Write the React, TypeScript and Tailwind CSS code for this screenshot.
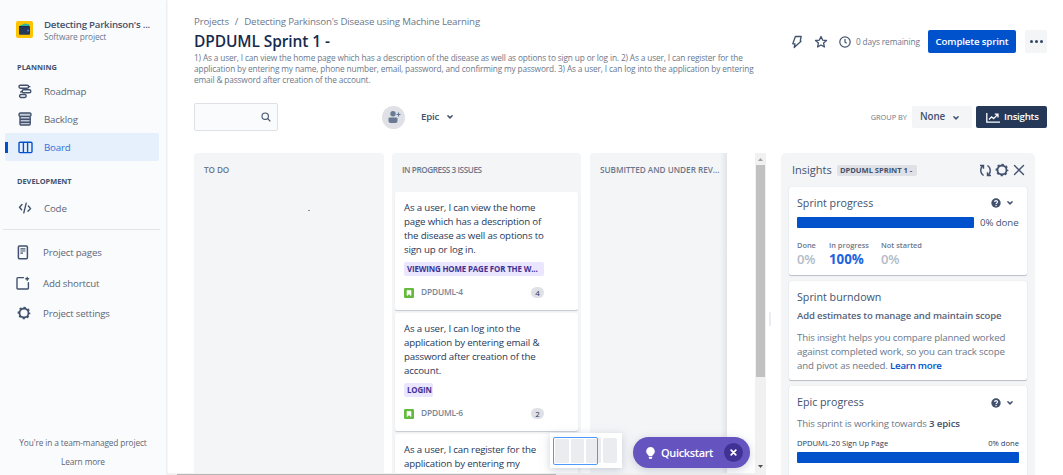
import React from "react";

type IconProps = { className?: string };

const Chevron = ({ className = "" }: IconProps) => (
  <svg viewBox="0 0 8 6" className={`h-[6px] w-[8px] shrink-0 ${className}`} fill="none" stroke="currentColor" strokeWidth="1.5" strokeLinecap="round" strokeLinejoin="round">
    <path d="M1.9 1.8 4 3.9l2.1-2.1" />
  </svg>
);

const Gear = ({ className = "" }: IconProps) => (
  <svg viewBox="0 0 14 14" className={className} fill="none" stroke="currentColor">
    <circle cx="7" cy="7" r="4.500" strokeWidth="1.800" />
    <circle cx="7" cy="7" r="5.600" strokeWidth="1.500" strokeDasharray="2.200 2.198" strokeDashoffset="1.100" />
  </svg>
);

const RoadmapIcon = () => (
  <svg viewBox="0 0 14 15" className="h-[15px] w-[14px]" fill="none" stroke="currentColor" strokeWidth="1.4">
    <rect x="1" y="1.2" width="9.6" height="3" rx="1.4" />
    <rect x="4.2" y="5.8" width="8.6" height="3" rx="1.4" />
    <rect x="1.6" y="10.5" width="6.6" height="3" rx="1.4" />
    <path d="M10.6 2.600h1.800M4.200 7.200c-1.300 0-1.500.800-1.500 1.600" />
  </svg>
);

const BacklogIcon = () => (
  <svg viewBox="0 0 14 14" className="h-[14px] w-[14px]" fill="#c3c9d4" stroke="currentColor" strokeWidth="1.4">
    <rect x="2" y="4.4" width="10.2" height="8.6" rx="1" />
    <path d="M2 7.3h10.2M2 10.2h10.2" />
    <rect x="1" y="1" width="12" height="3.4" rx="1.3" />
  </svg>
);

const BoardIcon = () => (
  <svg viewBox="0 0 15 13" className="h-[13px] w-[15px]" fill="none" stroke="currentColor" strokeWidth="1.4">
    <rect x="1" y="1.2" width="13" height="10.4" rx="1" />
    <path d="M5.4 1.2v10.4M9.6 1.2v10.4" />
  </svg>
);

const CodeIcon = () => (
  <svg viewBox="0 0 14 12" className="h-[12px] w-[14px]" fill="none" stroke="currentColor" strokeWidth="1.4" strokeLinecap="round" strokeLinejoin="round">
    <path d="M4 2.600 1.500 5.200 3.600 7.800M8.200 1.200 5.800 10.800M10.400 4 12.600 6.600 10 9.200" />
  </svg>
);

const PageIcon = () => (
  <svg viewBox="0 0 12 15" className="h-[15px] w-[12px]" fill="none" stroke="currentColor" strokeWidth="1.5">
    <rect x="1.4" y="1" width="9" height="12.8" rx="1" />
    <path d="M3.4 3.9h5M3.4 6h5M3.4 8.1h2.6" strokeWidth="1.1" />
  </svg>
);

const ShortcutIcon = () => (
  <svg viewBox="0 0 14 14" className="h-[14px] w-[14px]" fill="none" stroke="currentColor" strokeWidth="1.4" strokeLinecap="round">
    <path d="M7.500 1.600H1.8a.8.8 0 0 0-.8.8v9.8a.8.8 0 0 0 .8.8h9.8a.8.8 0 0 0 .8-.8V6.6" />
    <path d="M11.2 1.400v2.800M9.800 2.8h2.800" />
  </svg>
);

const HelpIcon = () => (
  <svg viewBox="0 0 10 10" className="h-[10px] w-[10px]">
    <circle cx="5" cy="5" r="4.7" fill="#42526e" />
    <path d="M3.6 4c0-1.9 2.9-1.8 2.9-.1C6.500 5 5.100 4.900 5.100 6" fill="none" stroke="#fff" strokeWidth="1.1" />
    <circle cx="5.100" cy="7.500" r=".7" fill="#fff" />
  </svg>
);

const StoryIcon = () => (
  <svg viewBox="0 0 10 10" className="h-[10px] w-[10px]">
    <rect width="10" height="10" rx="1.200" fill="#63ba3c" />
    <path d="M3 2.400h4v5.200L5 5.900 3 7.600Z" fill="#fff" stroke="#fff" strokeWidth=".6" />
  </svg>
);

function NavItem({ icon, label, height, active = false }: { icon: React.ReactNode; label: string; height: string; active?: boolean }) {
  return (
    <div className={`flex items-center ${height} ${active ? "rounded-[2px] bg-[#e6effc] text-[#0052cc]" : "text-[#42526e]"}`}>
      <span className={`h-[11px] w-[3px] ${active ? "bg-[#0052cc]" : ""}`} />
      <span className="flex w-[34px] items-center justify-center">{icon}</span>
      <span className={`ml-[2px] pt-[2px] text-[9.700px] tracking-[-0.16px] ${active ? "text-[#2f6fd8]" : "text-[#5a6679]"}`}>{label}</span>
    </div>
  );
}

function Sidebar() {
  return (
    <aside className="flex h-full w-[166px] shrink-0 flex-col bg-[#fafbfc] pl-[5px] shadow-[1px_0_2px_#e4e6ea]">
      <header className="mt-[14px] flex h-[30px] items-center pl-[11px]">
        <svg viewBox="0 0 17 17" className="h-[17px] w-[17px]">
          <rect width="17" height="17" rx="2" fill="#ffc400" />
          <path d="M4 4.500 9 2.500 13.500 3.500V6H4Z" fill="#2bb5a0" />
          <rect x="3" y="5" width="11" height="8.800" rx="1" fill="#253858" />
          <circle cx="12" cy="9.500" r="1" fill="#2684ff" />
          <path d="M3 5.500h10" stroke="#172b4d" />
        </svg>
        <div className="ml-[11px] pt-[2px] whitespace-nowrap">
          <div className="text-[9.700px] leading-[13px] font-semibold tracking-[-0.24px] text-[#42526e]">Detecting Parkinson's ...</div>
          <div className="text-[8.400px] leading-[12px] tracking-[-0.13px] text-[#6b778c]">Software project</div>
        </div>
      </header>
      <h2 className="mt-[17px] pl-[12px] text-[7.400px] leading-[12px] font-bold text-[#42526e]">PLANNING</h2>
      <nav className="mt-[4px] mr-[7px]">
        <NavItem icon={<RoadmapIcon />} label="Roadmap" height="h-[28px]" />
        <NavItem icon={<BacklogIcon />} label="Backlog" height="h-[28px]" />
        <NavItem icon={<BoardIcon />} label="Board" height="h-[28px]" active />
      </nav>
      <h2 className="mt-[14px] pl-[12px] text-[7.400px] leading-[12px] font-bold text-[#42526e]">DEVELOPMENT</h2>
      <nav className="mt-[7px] mr-[6px]">
        <NavItem icon={<CodeIcon />} label="Code" height="h-[28px]" />
      </nav>
      <hr className="mt-[7px] mr-[6px] -ml-[2px] border-[#e1e4e9]" />
      <nav className="mt-[7px] -ml-[2px] [&>div>span:last-child]:ml-[3px]">
        <NavItem icon={<PageIcon />} label="Project pages" height="h-[31px]" />
        <NavItem icon={<ShortcutIcon />} label="Add shortcut" height="h-[30px]" />
        <NavItem icon={<Gear className="ml-[2px] h-[14px] w-[14px]" />} label="Project settings" height="h-[30px]" />
      </nav>
      <footer className="mt-auto pr-[5px] pb-[4px] text-center text-[8.300px] leading-[19px] tracking-[-0.11px] text-[#5a6679]">
        <div>You're in a team-managed project</div>
        <div>Learn more</div>
      </footer>
    </aside>
  );
}

function TopBar() {
  return (
    <div className="flex h-[96px] justify-between pt-[14px]">
      <div className="w-[575px] whitespace-nowrap">
        <div className="pt-px text-[9.700px] leading-[14px] tracking-[-0.17px] text-[#6b778c]">
          Projects<span className="mx-[6px]">/</span>Detecting Parkinson's Disease using Machine Learning
        </div>
        <h1 className="mt-[2px] text-[15.500px] leading-[20px] font-semibold tracking-[-0.1px] text-[#172b4d]">DPDUML Sprint 1 -</h1>
        <p className="mt-px text-[8.300px] leading-[11.200px] tracking-[-0.145px] text-[#6b778c]">
          1) As a user, I can view the home page which has a description of the disease as well as options to sign up or log in. 2) As a user, I can register for the<br />
          application by entering my name, phone number, email, password, and confirming my password. 3) As a user, I can log into the application by entering<br />
          email &amp; password after creation of the account.
        </p>
      </div>
      <div className="mt-[16px] flex h-[23px] items-center text-[#42526e]">
        <svg viewBox="0 0 12 14" className="h-[14px] w-[12px]" fill="none" stroke="currentColor" strokeWidth="1.300" strokeLinejoin="round">
          <path d="M4.400 1.500h5.800L9.300 5.500 10 6.300 3.200 12.500 4 8.800H1.800Z" />
        </svg>
        <svg viewBox="0 0 14 14" className="ml-[11px] h-[14px] w-[14px]" fill="none" stroke="currentColor" strokeWidth="1.300" strokeLinejoin="round">
          <path d="m7 1.500 1.600 3.600 3.900.4-2.900 2.600.8 3.900L7 10l-3.400 2 .8-3.900-2.900-2.600 3.900-.4Z" />
        </svg>
        <svg viewBox="0 0 12 12" className="ml-[11px] h-[12px] w-[12px]" fill="none" stroke="currentColor" strokeWidth="1.200">
          <circle cx="6" cy="6" r="5.200" />
          <path d="M6 3v3.200l1.800 1" />
        </svg>
        <span className="ml-[5px] w-[72px] pt-px text-[8.300px] tracking-[-0.14px] whitespace-nowrap text-[#6b778c]">0 days remaining</span>
        <button className="h-[23px] w-[88px] rounded-[2px] bg-[#0052cc] pt-px text-[9.700px] font-semibold tracking-[-0.15px] whitespace-nowrap text-white">Complete sprint</button>
        <button className="ml-[9px] flex h-[23px] w-[22px] items-center justify-center gap-[2px] rounded-[2px] bg-[#f4f5f7]">
          <i className="size-[3px] rounded-full bg-[#344563]" />
          <i className="size-[3px] rounded-full bg-[#344563]" />
          <i className="size-[3px] rounded-full bg-[#344563]" />
        </button>
      </div>
    </div>
  );
}

function Toolbar() {
  return (
    <div className="mt-[7px] flex h-[28px] items-center text-[#42526e]">
      <div className="flex h-[28px] w-[84px] items-center justify-end rounded-[2px] border border-[#dfe1e6] bg-[#fafbfc] pr-[6px]">
        <svg viewBox="0 0 10 10" className="h-[10px] w-[10px]" fill="none" stroke="currentColor" strokeWidth="1.100" strokeLinecap="round">
          <circle cx="4.200" cy="4.200" r="3.200" />
          <path d="m6.700 6.700 2.300 2.300" />
        </svg>
      </div>
      <div className="ml-[104px] flex size-[23px] items-center justify-center rounded-full bg-[#dfe1e6]">
        <svg viewBox="0 0 14 14" className="h-[14px] w-[14px]" fill="#6b7a94">
          <circle cx="6" cy="3.800" r="2.700" />
          <path d="M1.500 8.500q0-1 1-1h7q1 0 1 1V11q0 2-2 2h-5q-2 0-2-2Z" />
          <path d="M11.500 2.500v4M9.500 4.500h4" stroke="#6b7a94" strokeWidth="1.200" />
        </svg>
      </div>
      <span className="ml-[16px] w-[20px] pt-px text-[9.700px] font-semibold tracking-[-0.2px]">Epic</span>
      <Chevron className="ml-[5px]" />
      <div className="ml-auto flex items-center">
        <span className="pt-px text-[7.400px] whitespace-nowrap text-[#6b778c]">GROUP BY</span>
        <button className="ml-[5px] flex h-[22px] w-[60px] items-center rounded-[2px] bg-[#f4f5f7] pt-px pl-[8px] text-[9.800px] font-semibold tracking-[-0.1px]">
          None
          <Chevron className="ml-[7px]" />
        </button>
        <button className="ml-[4px] flex h-[22px] w-[71px] items-center rounded-[2px] bg-[#253858] pt-px pl-[10px] text-[9.700px] font-semibold tracking-[-0.24px] text-white">
          <svg viewBox="0 0 14 10" className="mr-[4px] h-[10px] w-[14px]" fill="none" stroke="currentColor" strokeWidth="1.300">
            <path d="M.8 0v9.200H14M3 6.500 5.600 3.800 7.600 5.600 11.600 1.600M8.800 1.200h3.200v3.200" />
          </svg>
          Insights
        </button>
      </div>
    </div>
  );
}

function IssueCard({ lines, epic, epicWidth, issueKey, points }: { lines: string[]; epic?: string; epicWidth?: string; issueKey?: string; points?: number }) {
  return (
    <article className="h-[118px] shrink-0 rounded-[2px] bg-white px-[9px] pt-[9px] shadow-[0_1px_1px_#c5c9d1]">
      <div className="text-[9.700px] leading-[14px] tracking-[-0.16px] whitespace-nowrap text-[#253858]">
        {lines.map((line) => (
          <div key={line}>{line}</div>
        ))}
      </div>
      {epic && (
        <div className={`mt-[5px] h-[14px] rounded-[2px] bg-[#eae6ff] pl-[3px] text-[7.900px] leading-[14px] font-bold tracking-[-0.14px] whitespace-nowrap text-[#403294] ${epicWidth}`}>{epic}</div>
      )}
      {issueKey && (
        <div className="mt-[11px] flex h-[11px] w-[140px] items-center">
          <StoryIcon />
          <span className="ml-[7px] text-[8.400px] font-semibold tracking-[-0.18px] text-[#7a8597]">{issueKey}</span>
          <span className="ml-auto flex h-[11px] w-[13px] items-center justify-center rounded-full bg-[#dfe1e6] text-[8px] text-[#253858]">{points}</span>
        </div>
      )}
    </article>
  );
}

function Board() {
  return (
    <section className="flex h-[320px] overflow-hidden">
      <div className="h-full w-[190px] shrink-0 rounded-t-[4px] bg-[#f4f5f7] pt-[11px]">
        <h3 className="pl-[10px] text-[8.200px] leading-[12px] font-semibold tracking-[-0.1px] whitespace-nowrap text-[#6b778c]">TO DO</h3>
        <div className="mt-[34px] ml-[114px] h-px w-[2px] bg-[#8a909b]" />
      </div>
      <div className="ml-[8px] h-full w-[189px] shrink-0 rounded-t-[4px] bg-[#f4f5f7] px-[3px] pt-[11px]">
        <h3 className="pl-[7px] text-[8.200px] leading-[12px] font-semibold tracking-[-0.42px] whitespace-nowrap text-[#6b778c]">IN PROGRESS 3 ISSUES</h3>
        <div className="mt-[16px] flex flex-col gap-[3px]">
          <IssueCard
            lines={["As a user, I can view the home", "page which has a description of", "the disease as well as options to", "sign up or log in."]}
            epic="VIEWING HOME PAGE FOR THE W..."
            epicWidth="w-[140px]"
            issueKey="DPDUML-4"
            points={4}
          />
          <IssueCard
            lines={["As a user, I can log into the", "application by entering email &", "password after creation of the", "account."]}
            epic="LOGIN"
            epicWidth="w-[29px]"
            issueKey="DPDUML-6"
            points={2}
          />
          <IssueCard lines={["As a user, I can register for the", "application by entering my"]} />
        </div>
      </div>
      <div className="ml-[9px] h-full w-[137px] shrink-0 rounded-tl-[4px] bg-[#f4f5f7] bg-linear-to-r from-[#f4f5f7] from-95% to-[#e2e4ea] pt-[11px]">
        <h3 className="pl-[10px] text-[8.200px] leading-[12px] font-semibold tracking-[-0.02px] whitespace-nowrap text-[#6b778c]">SUBMITTED AND UNDER REV...</h3>
      </div>
      <div className="ml-[28px] flex h-full w-[11px] shrink-0 flex-col items-center bg-[#f1f1f1]">
        <svg viewBox="0 0 5 3" className="mt-[5px] h-[3px] w-[5px]"><path d="M0 3 2.500 0 5 3Z" fill="#a3a3a3" /></svg>
        <div className="mt-[4px] h-[212px] w-[9px] bg-[#c1c1c1]" />
        <svg viewBox="0 0 5 3" className="mt-auto mb-[5px] h-[3px] w-[5px]"><path d="M0 0 2.500 3 5 0Z" fill="#505050" /></svg>
      </div>
      <div className="mt-[159px] ml-[3px] h-[14px] w-[2px] bg-[#ebecf0]" />
    </section>
  );
}

const cardShadow = "rounded-[2px] bg-white px-[8px] shadow-[0_1px_1px_#b9bec7,0_0_1px_#c9cdd4]";

function Insights() {
  return (
    <section className="ml-[10px] flex h-[322px] w-[254px] shrink-0 flex-col overflow-hidden rounded-t-[5px] bg-[#f4f5f7] px-[8px] text-[#42526e]">
      <header className="flex h-[34px] shrink-0 items-center pl-[3px]">
        <span className="w-[40px] text-[11px]">Insights</span>
        <span className="ml-[5px] h-[11px] w-[80px] rounded-[2px] bg-[#dfe1e6] pl-[3px] text-[7.600px] leading-[11px] font-bold tracking-[-0.05px] whitespace-nowrap">DPDUML SPRINT 1 -</span>
        <svg viewBox="0 0 13 13" className="ml-auto h-[13px] w-[13px]" fill="none" stroke="currentColor" strokeWidth="1.400">
          <path d="M1 1.500h3.500v3.200M4.300 1.700C.8 4 .9 9.200 4.600 11.500M12 11.500H8.500V8.300M8.700 11.300C12.200 9 12.100 3.800 8.400 1.500" />
        </svg>
        <Gear className="ml-[3px] h-[14px] w-[14px]" />
        <svg viewBox="0 0 12 12" className="mr-[2px] ml-[4px] h-[12px] w-[12px]" fill="none" stroke="currentColor" strokeWidth="1.400" strokeLinecap="round">
          <path d="m1.500 1.500 9 9m0-9-9 9" />
        </svg>
      </header>
      <article className={`h-[88px] shrink-0 ${cardShadow}`}>
        <div className="flex h-[30px] items-center pt-[2px]">
          <h3 className="text-[10.700px]">Sprint progress</h3>
          <span className="ml-auto"><HelpIcon /></span>
          <Chevron className="mr-[5px] ml-[5px]" />
        </div>
        <div className="flex h-[11px] items-center">
          <div className="h-[11px] w-[177px] rounded-[1px] bg-[#0052cc]" />
          <span className="ml-[6px] pt-px text-[9.700px] tracking-[-0.1px] whitespace-nowrap">0% done</span>
        </div>
        <div className="mt-[11px] flex whitespace-nowrap">
          <div className="w-[32px]">
            <div className="text-[7.400px] leading-[12px] font-semibold text-[#6b778c]">Done</div>
            <div className="text-[13px] leading-[16px] font-semibold tracking-[-0.2px] text-[#b3bac5]">0%</div>
          </div>
          <div className="w-[52px]">
            <div className="text-[7.400px] leading-[12px] font-semibold text-[#6b778c]">In progress</div>
            <div className="text-[13.300px] leading-[16px] font-bold text-[#1d63e0]">100%</div>
          </div>
          <div>
            <div className="text-[7.400px] leading-[12px] font-semibold text-[#6b778c]">Not started</div>
            <div className="text-[13px] leading-[16px] font-semibold tracking-[-0.2px] text-[#b3bac5]">0%</div>
          </div>
        </div>
      </article>
      <article className={`mt-[6px] h-[99px] shrink-0 whitespace-nowrap ${cardShadow}`}>
        <h3 className="pt-[8px] text-[10.700px] leading-[16px]">Sprint burndown</h3>
        <h4 className="mt-[4px] text-[9.500px] leading-[14px] font-semibold tracking-[-0.12px] text-[#56637b]">Add estimates to manage and maintain scope</h4>
        <p className="mt-[8px] text-[9.700px] leading-[14px] tracking-[-0.16px] text-[#6b778c]">
          This insight helps you compare planned worked<br />
          against completed work, so you can track scope<br />
          and pivot as needed. <a className="font-semibold tracking-[-0.27px] text-[#0052cc]">Learn more</a>
        </p>
      </article>
      <article className={`mt-[6px] h-[95px] shrink-0 whitespace-nowrap ${cardShadow}`}>
        <div className="flex h-[30px] items-center pt-[3px]">
          <h3 className="text-[10.700px]">Epic progress</h3>
          <span className="ml-auto"><HelpIcon /></span>
          <Chevron className="mr-[5px] ml-[5px]" />
        </div>
        <p className="pt-px text-[9.700px] leading-[14px] tracking-[-0.16px] text-[#6b778c]">
          This sprint is working towards <b className="font-semibold text-[#42526e]">3 epics</b>
        </p>
        <div className="mt-[6px] flex justify-between text-[7.600px] leading-[12px] text-[#253858]">
          <span>DPDUML-20 Sign Up Page</span>
          <span>0% done</span>
        </div>
        <div className="mt-[3px] h-[11px] rounded-[1px] bg-[#0052cc]" />
      </article>
    </section>
  );
}

export default function App() {
  return (
    <div className="relative flex h-[475px] w-[1063px] overflow-hidden bg-white font-['Open_Sans','Noto_Sans',sans-serif]">
      <Sidebar />
      <main className="flex w-[897px] flex-col">
        <div className="pr-[16px] pl-[28px]">
          <TopBar />
          <Toolbar />
        </div>
        <div className="mt-[22px] flex">
          <div className="w-[605px] shrink-0">
            <div className="pl-[28px]"><Board /></div>
            <div className="ml-[1px] h-[2px] w-[599px] bg-[#f1f1f1] pt-px pl-[10px]">
              <div className="h-px w-[379px] bg-[#b5b5b5]" />
            </div>
          </div>
          <Insights />
        </div>
      </main>
      <div className="absolute top-[433px] left-[550px] flex h-[35px] w-[72px] items-center bg-white pl-[3px] shadow-[0_2px_8px_#9aa3b880]">
        <div className="flex h-[28px] w-[45px] gap-[2px] rounded-[2px] border border-[#4c9aff] bg-white py-px pl-px">
          <i className="w-[14px] rounded-[1px] bg-[#ebecf0]" />
          <i className="w-[13px] rounded-[1px] bg-[#ebecf0]" />
          <i className="w-[11px] rounded-[1px] bg-[#ebecf0]" />
        </div>
        <i className="h-[25px] w-[3px] rounded-r-[1px] bg-[#ebecf0]" />
        <i className="ml-[2px] h-[25px] w-[14px] rounded-[2px] bg-[#ebecf0]" />
      </div>
      <div className="absolute top-[437px] left-[633px] flex h-[31px] w-[117px] items-center rounded-full bg-[#6554c0] pl-[13px] text-white shadow-[0_2px_8px_#9aa3b880]">
        <svg viewBox="0 0 9 12" className="h-[12px] w-[9px]" fill="currentColor">
          <path d="M4.500 0a4.300 4.300 0 0 0-2.600 7.700c.6.500.6.700.6 1.300h4c0-.6 0-.8.600-1.300A4.300 4.300 0 0 0 4.500 0ZM2.800 9.700h3.400v1q0 1.300-1.700 1.300t-1.700-1.300Z" />
        </svg>
        <span className="ml-[6px] pt-px text-[11px] font-semibold tracking-[-0.36px]">Quickstart</span>
        <span className="mr-[7px] ml-auto flex size-[19px] items-center justify-center rounded-full bg-[#403294]">
          <svg viewBox="0 0 7 7" className="h-[7px] w-[7px]" fill="none" stroke="currentColor" strokeWidth="1.700" strokeLinecap="round">
            <path d="m1.200 1.200 4.600 4.600m0-4.600L1.200 5.800" />
          </svg>
        </span>
      </div>
    </div>
  );
}
